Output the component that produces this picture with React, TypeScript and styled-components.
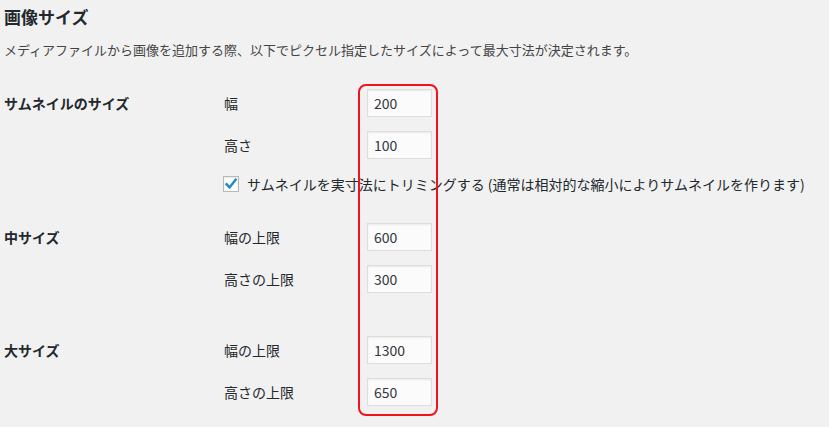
import React from 'react';
import styled, { createGlobalStyle } from 'styled-components';

const GlobalStyle = createGlobalStyle`
  html, body {
    margin: 0;
    padding: 0;
    background: #f1f1f1;
  }
  body {
    font-family: "Noto Sans CJK JP", "Liberation Sans", sans-serif;
    color: #23282d;
  }
`;

type Field = { label: string; value: string };
type Section = { title: string; top: number; fields: Field[]; crop?: boolean };

const sections: Section[] = [
  {
    title: 'サムネイルのサイズ',
    top: 28,
    fields: [
      { label: '幅', value: '200' },
      { label: '高さ', value: '100' },
    ],
    crop: true,
  },
  {
    title: '中サイズ',
    top: 28,
    fields: [
      { label: '幅の上限', value: '600' },
      { label: '高さの上限', value: '300' },
    ],
  },
  {
    title: '大サイズ',
    top: 43,
    fields: [
      { label: '幅の上限', value: '1300' },
      { label: '高さの上限', value: '650' },
    ],
  },
];

const App: React.FC = () => {
  return (
    <Page>
      <GlobalStyle />
      <Title>画像サイズ</Title>
      <Description>
        メディアファイルから画像を追加する際、以下でピクセル指定したサイズによって最大寸法が決定されます。
      </Description>
      <Table>
        {sections.map((section) => (
          <SectionRow key={section.title} $top={section.top}>
            <SectionLabel>{section.title}</SectionLabel>
            <Fields>
              {section.fields.map((field) => (
                <FieldRow key={field.label}>
                  <FieldLabel>{field.label}</FieldLabel>
                  <NumberInput defaultValue={field.value} />
                </FieldRow>
              ))}
              {section.crop ? (
                <CheckRow>
                  <CheckBox>
                    <svg width="14" height="14" viewBox="0 0 14 14">
                      <path
                        d="M2.5 7.2 L5.6 10.4 L11.6 2.8"
                        fill="none"
                        stroke="#1e8cbe"
                        strokeWidth="2.4"
                        strokeLinecap="square"
                      />
                    </svg>
                  </CheckBox>
                  <CheckText>
                    サムネイルを実寸法にトリミングする (通常は相対的な縮小によりサムネイルを作ります)
                  </CheckText>
                </CheckRow>
              ) : null}
            </Fields>
          </SectionRow>
        ))}
        <Highlight />
      </Table>
    </Page>
  );
};

export default App;

const Page = styled.div`
  width: 829px;
  height: 427px;
  padding: 6px 0 0 4px;
  box-sizing: border-box;
  overflow: hidden;
`;

const Title = styled.h2`
  margin: 0;
  font-size: 17px;
  font-weight: 700;
  line-height: 22px;
  color: #23282d;
`;

const Description = styled.p`
  margin: 11px 0 0;
  font-size: 13px;
  line-height: 22px;
  color: #444;
`;

const Table = styled.div`
  position: relative;
  display: flex;
  flex-direction: column;
`;

const SectionRow = styled.div<{ $top: number }>`
  display: grid;
  grid-template-columns: 220px 1fr;
  margin-top: ${(p) => p.$top}px;
`;

const SectionLabel = styled.div`
  font-size: 14px;
  font-weight: 700;
  line-height: 28px;
  color: #23282d;
`;

const Fields = styled.div`
  display: flex;
  flex-direction: column;
  gap: 14px;
`;

const FieldRow = styled.div`
  display: flex;
  align-items: center;
  height: 28px;
`;

const FieldLabel = styled.label`
  width: 143px;
  font-size: 14px;
  color: #23282d;
`;

const NumberInput = styled.input`
  width: 65px;
  height: 28px;
  box-sizing: border-box;
  padding: 0 6px;
  border: 1px solid #dddddd;
  background: #fbfbfb;
  box-shadow: inset 0 1px 2px rgba(0, 0, 0, 0.07);
  font-family: "Noto Sans CJK JP", "Liberation Sans", sans-serif;
  font-size: 14px;
  color: #32373c;
  outline: none;
`;

const CheckRow = styled.div`
  display: flex;
  align-items: center;
  height: 22px;
`;

const CheckBox = styled.span`
  display: flex;
  align-items: center;
  justify-content: center;
  width: 16px;
  height: 16px;
  box-sizing: border-box;
  border: 1px solid #b4b9be;
  background: #fff;
  box-shadow: inset 0 1px 2px rgba(0, 0, 0, 0.1);
  margin-left: -1px;
  margin-right: 8px;
`;

const CheckText = styled.span`
  font-size: 14px;
  color: #23282d;
  white-space: nowrap;
`;

const Highlight = styled.div`
  position: absolute;
  left: 354px;
  top: 23px;
  width: 80px;
  height: 332px;
  box-sizing: border-box;
  border: 2px solid #f2121b;
  border-radius: 8px;
  pointer-events: none;
`;
